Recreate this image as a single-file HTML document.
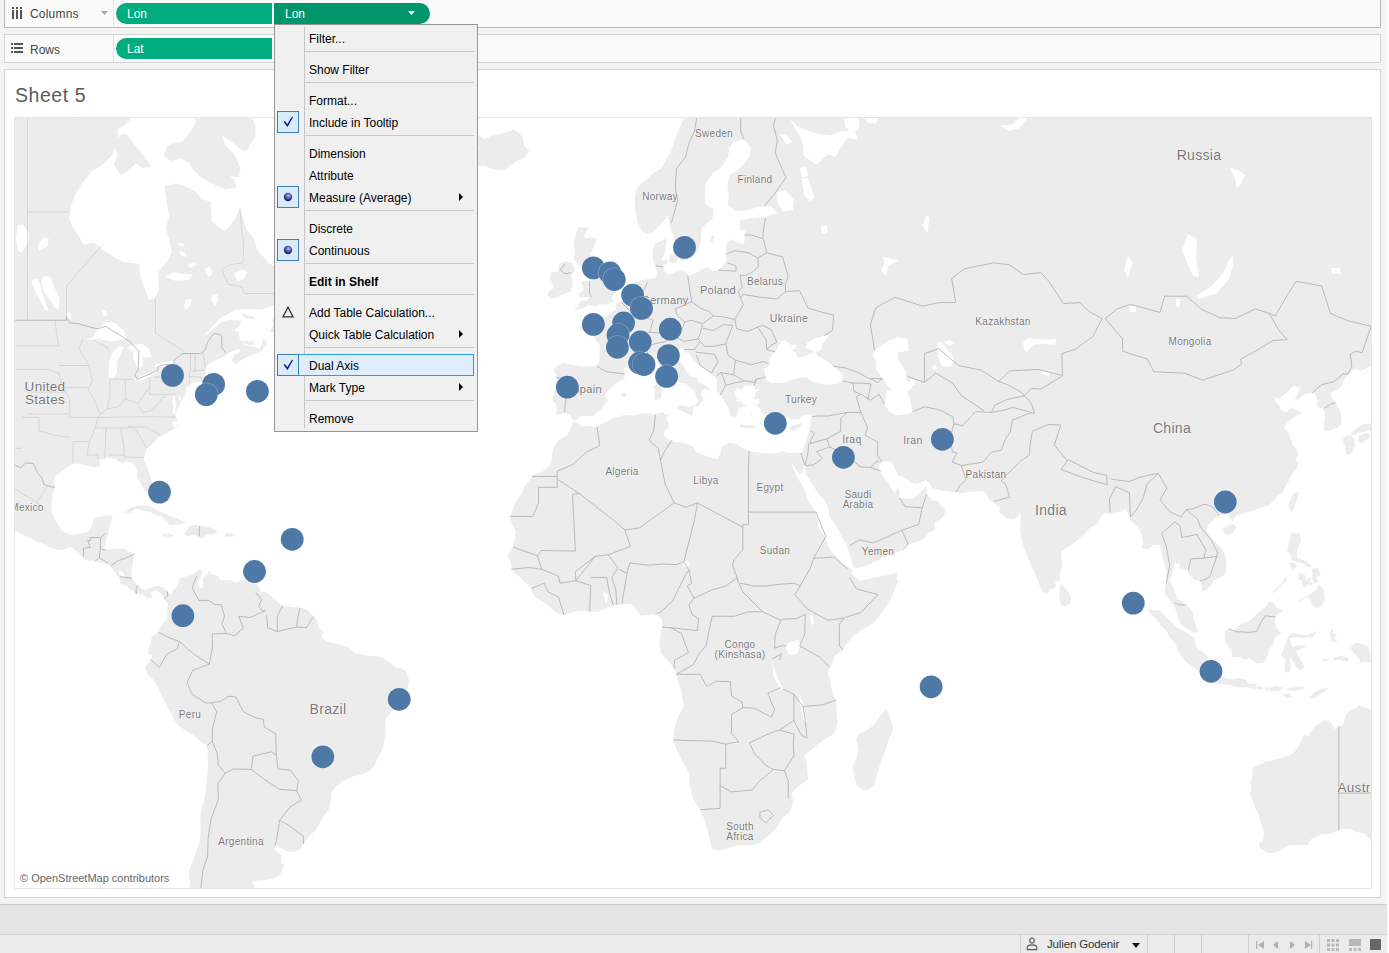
<!DOCTYPE html>
<html><head><meta charset="utf-8">
<style>
*{box-sizing:border-box}
html,body{margin:0;padding:0}
body{width:1389px;height:953px;overflow:hidden;background:#f3f3f3;position:relative;font-family:"Liberation Sans",sans-serif;color:#333}
.abs{position:absolute}
.shelf{position:absolute;left:4px;width:1377px;background:#fafafa;border:1px solid #d4d4d4}
.shelf .lbl{position:absolute;left:25px;top:8px;font-size:12px;color:#444;letter-spacing:0.2px}
.shelf .div{position:absolute;left:108px;top:0;bottom:0;width:1px;background:#e2e2e2}
.pill{position:absolute;height:21px;background:#00ad7f;color:#fff;font-size:12px;line-height:23px;padding-left:11px;border-radius:10.5px 0 0 10.5px}
.sheet{position:absolute;left:4px;top:69px;width:1377px;height:829px;background:#fff;border:1px solid #d6d6d6}
.title{position:absolute;left:15px;top:84px;font-size:19.5px;color:#5c5c5c;letter-spacing:0.55px}
.map{position:absolute;left:14px;top:117px;width:1358px;height:772px;overflow:hidden;background:#fff;border:1px solid #e6e6e6}
.lab{position:absolute;color:#777;font-size:11px;letter-spacing:0.3px;white-space:nowrap;transform:translate(-50%,-50%);text-shadow:0 0 1px #fff,0 0 1px #fff,0 0 1px #fff}
.menu{position:absolute;left:274px;top:24px;width:204px;height:408px;background:#f0f0f0;border:1px solid #979797;}
.mi{position:absolute;left:34px;font-size:12px;color:#000;line-height:24px;height:22px;white-space:nowrap}
.sep{position:absolute;left:30px;right:3px;height:1px;background:#c9c9c9}
.vsep{position:absolute;left:29px;top:2px;bottom:3px;width:1px;background:#c6c6c6}
.chk{position:absolute;left:2px;width:22px;height:22px;background:#d8ebf9;border:1px solid #3c80b4}
.arr{position:absolute;left:184px;width:0;height:0;border-left:4px solid #000;border-top:4px solid transparent;border-bottom:4px solid transparent}
.status{position:absolute;left:0;top:934px;width:1389px;height:19px;background:#ebebeb;border-top:1px solid #d2d2d2}
.ssep{position:absolute;top:0;bottom:0;width:1px;background:#cfcfcf}
</style></head><body>
<!-- columns shelf -->
<div class="shelf" style="top:-1px;height:29px;border-color:#b9b9b9;border-top:none">
  <svg class="abs" style="left:7px;top:6px" width="12" height="15" viewBox="0 0 12 15">
    <rect x="0" y="2" width="2" height="2" fill="#555"/><rect x="4" y="2" width="2" height="2" fill="#555"/><rect x="8" y="2" width="2" height="2" fill="#555"/>
    <rect x="0" y="5" width="2" height="9" fill="#555"/><rect x="4" y="5" width="2" height="9" fill="#555"/><rect x="8" y="5" width="2" height="9" fill="#555"/>
  </svg>
  <div class="lbl" style="top:8px">Columns</div>
  <svg class="abs" style="left:96px;top:12px" width="8" height="5"><path d="M0,0 L7,0 L3.5,4Z" fill="#a8a8a8"/></svg>
  <div class="div"></div>
</div>
<div class="pill" style="left:116px;top:3px;width:156px">Lon</div>
<div class="pill" style="left:274px;top:3px;width:156px;background:#00956a;border-radius:0 10.5px 10.5px 0">Lon
  <svg class="abs" style="left:134px;top:8px" width="8" height="5"><path d="M0,0 L7,0 L3.5,4Z" fill="#fff"/></svg></div>
<!-- rows shelf -->
<div class="shelf" style="top:34px;height:29px">
  <svg class="abs" style="left:6px;top:8px" width="13" height="11" viewBox="0 0 13 11">
    <rect x="0" y="0" width="2" height="2" fill="#555"/><rect x="3" y="0" width="9" height="2" fill="#555"/>
    <rect x="0" y="4" width="2" height="2" fill="#555"/><rect x="3" y="4" width="9" height="2" fill="#555"/>
    <rect x="0" y="8" width="2" height="2" fill="#555"/><rect x="3" y="8" width="9" height="2" fill="#555"/>
  </svg>
  <div class="lbl" style="top:8px;letter-spacing:0">Rows</div>
  <div class="div"></div>
</div>
<div class="pill" style="left:116px;top:38px;width:156px">Lat</div>
<!-- sheet -->
<div class="sheet"></div>
<div class="title">Sheet 5</div>
<div class="map">
<svg width="1358" height="772" viewBox="14 117 1358 772" style="position:absolute;left:-1px;top:-1px">
<path d="M736.0,400.2 740.6,400.9 746.2,405.3 745.7,407.4 740.0,403.1ZM753.0,397.3 757.0,396.5 757.6,399.5 754.2,399.5ZM753.6,402.4 755.3,403.1 754.7,405.3 753.6,404.5ZM763.8,419.5 766.7,417.8 766.7,421.6 764.4,420.9ZM750.2,412.4 751.9,412.4 751.9,414.6 750.2,414.6ZM759.9,421.6 761.0,421.6 761.0,425.1 759.9,424.4ZM-29.1,-19.2 141.2,-19.2 142.9,84.0 138.3,110.6 125.3,125.3 117.3,129.6 118.5,142.2 111.7,155.6 104.3,163.5 91.8,171.2 82.7,182.4 75.3,194.5 70.8,206.2 69.1,218.7 71.9,225.3 79.9,238.2 83.3,244.5 94.1,242.4 103.7,250.7 115.6,257.9 124.1,261.9 139.5,263.9 140.0,275.6 144.6,287.9 149.1,299.9 154.8,298.1 158.8,290.7 158.2,271.7 167.3,260.9 171.8,251.8 169.5,240.3 165.6,228.6 169.0,216.4 167.3,205.1 164.4,186.1 175.2,183.6 184.9,186.1 195.1,190.9 201.9,199.2 210.4,201.6 211.0,211.9 211.6,220.9 218.9,227.5 225.2,230.7 230.8,225.3 236.5,216.4 239.9,208.5 243.3,219.8 246.7,229.7 253.6,238.2 257.0,248.7 263.2,256.8 268.9,262.9 277.4,267.8 281.4,275.6 288.7,279.4 289.9,287.9 290.4,293.5 281.9,299.0 271.7,306.2 262.1,309.8 249.0,308.9 234.8,309.8 227.4,314.2 219.5,318.5 211.6,327.1 205.3,334.7 201.9,338.1 207.0,333.9 213.8,328.8 221.8,322.0 229.7,319.4 241.6,321.1 238.8,327.1 234.3,329.7 238.8,332.2 239.9,339.7 244.5,344.7 254.7,347.1 260.4,348.7 263.8,338.1 267.2,343.8 261.5,351.2 251.9,355.2 243.3,358.4 236.0,363.9 231.4,360.7 234.3,354.4 241.1,351.2 238.2,348.7 230.8,352.0 225.2,356.0 217.8,359.2 210.4,363.1 207.6,365.5 204.7,370.9 205.3,376.3 209.3,378.6 206.4,380.9 200.8,381.6 192.8,383.1 186.6,387.6 186.0,393.6 181.5,400.2 180.3,403.8 177.5,409.6 175.2,414.6 177.5,421.6 178.1,426.5 172.4,430.0 165.0,434.1 158.8,436.8 153.1,443.6 147.4,448.3 145.1,453.0 144.0,460.3 146.8,466.8 149.1,472.6 152.0,481.6 152.0,488.5 149.7,492.3 146.3,492.3 142.9,487.9 140.0,482.2 137.2,476.5 137.2,470.7 135.5,466.8 131.5,462.2 127.0,461.6 121.9,463.5 115.6,458.9 107.1,457.6 99.2,459.6 100.3,466.1 95.8,467.4 88.4,466.1 81.6,464.2 74.2,463.5 68.5,466.1 61.7,471.3 55.5,475.8 54.3,482.2 54.9,487.9 52.6,494.8 51.5,506.0 52.1,513.4 54.9,518.9 59.4,526.7 61.7,530.9 67.4,533.3 70.8,535.1 76.5,533.9 84.4,532.7 88.4,531.5 91.8,526.7 93.5,519.5 95.8,517.0 104.3,515.8 109.9,515.2 112.8,516.4 110.5,521.9 109.4,527.9 108.2,534.5 106.0,539.3 105.4,545.8 102.0,548.8 109.4,549.4 118.5,548.8 124.7,548.8 130.4,552.3 134.4,554.1 133.2,559.9 132.1,566.9 131.5,573.3 132.1,578.0 135.5,583.2 140.0,587.8 144.6,590.1 151.4,587.2 158.2,585.5 163.9,587.8 167.3,591.2 164.4,599.2 161.6,594.1 155.4,590.1 150.2,593.5 152.5,597.5 147.4,598.7 142.9,594.6 136.1,593.5 131.5,590.6 125.3,584.9 120.2,583.7 119.6,578.5 115.6,573.3 110.5,566.4 108.2,564.0 101.4,562.9 95.2,561.1 87.8,560.5 82.7,557.0 75.9,550.5 70.2,547.0 64.5,549.4 58.3,550.0 50.4,547.6 44.7,544.6 36.2,541.1 28.8,536.9 22.0,534.5 16.3,530.9 10.6,527.3 -29.1,527.3ZM113.9,164.8 117.3,155.6 115.1,144.9 119.6,135.2 126.4,133.8 132.7,142.2 143.4,155.6 150.8,166.1 144.0,168.6 135.5,163.5 128.1,171.2 120.7,175.0ZM186.6,75.8 194.5,110.6 195.7,122.4 189.4,133.8 182.0,142.2 172.4,143.5 166.7,146.2 163.9,155.6 170.7,160.9 180.9,158.3 188.8,163.5 194.5,171.2 201.3,177.5 208.1,181.2 217.2,186.1 226.3,189.7 230.3,188.5 236.5,187.3 234.3,179.9 221.8,167.4 217.2,166.1 224.6,173.7 232.0,176.2 238.8,177.5 240.5,168.6 236.5,159.6 234.3,154.3 225.2,144.9 221.8,135.2 232.0,142.2 239.9,149.0 246.7,151.6 251.3,142.2 255.3,136.6 255.3,125.3 251.9,118.0 249.0,75.8ZM269.4,332.2 273.4,324.6 272.3,320.3 278.0,312.4 280.8,305.3 287.6,296.2 291.6,297.2 289.3,306.2 291.0,312.4 297.8,315.0 302.9,318.5 302.4,324.6 306.3,328.8 304.1,332.2 307.5,333.1 305.2,339.7 302.4,340.5 299.0,336.4 294.4,338.1 289.3,337.2 291.0,333.1 286.5,332.2 280.2,332.2 270.6,332.2ZM241.1,340.5 245.6,341.4 254.7,341.4 251.9,345.5 244.5,343.8ZM240.5,313.3 253.6,316.8 256.4,319.4 245.6,318.5ZM124.7,512.8 129.8,507.8 135.5,506.6 142.3,505.4 149.7,506.0 156.5,509.7 165.0,513.4 172.4,517.0 177.5,518.2 185.4,522.5 181.5,524.3 169.5,524.9 166.1,521.3 162.2,517.0 155.4,514.6 149.7,512.1 145.1,510.9 141.2,510.3 136.6,508.5 129.8,512.8ZM184.3,533.9 189.4,526.1 194.0,524.9 199.6,525.5 208.1,526.7 213.3,529.1 218.4,532.7 213.8,533.9 206.4,535.1 201.3,538.7 194.5,535.1 187.1,536.3ZM161.6,533.9 169.5,533.3 174.1,535.7 170.1,537.5 162.7,535.7ZM224.6,533.3 234.3,533.9 233.7,536.3 225.2,536.9ZM255.3,578.5 260.9,578.5 260.4,582.6 255.3,582.6ZM163.9,482.2 169.5,483.5 168.4,486.0 163.3,484.1ZM162.7,492.3 166.1,494.2 164.4,499.2 161.6,496.7ZM167.3,591.2 170.7,594.6 173.5,589.5 177.5,586.0 179.2,579.1 184.3,576.8 190.5,575.6 196.2,572.2 199.6,569.3 203.0,571.6 200.2,577.4 200.2,580.8 203.6,585.5 203.0,578.0 207.6,574.5 209.8,570.4 211.6,574.5 218.4,576.2 220.6,580.3 227.4,579.7 236.5,582.6 242.2,579.7 249.0,579.1 255.3,579.7 250.7,582.6 257.0,584.3 261.5,591.2 266.6,592.4 274.0,598.7 280.8,604.9 289.3,606.7 300.1,607.8 306.3,609.5 313.2,615.8 316.6,619.8 319.4,628.8 323.4,631.1 321.1,636.8 326.2,641.3 331.9,643.0 337.0,643.6 342.7,645.3 348.9,647.6 354.6,653.3 360.3,653.8 368.2,656.1 376.7,656.1 382.4,657.8 388.6,661.8 395.5,667.5 402.8,669.2 406.8,672.0 409.1,681.2 407.9,687.5 405.1,693.2 400.6,700.1 395.5,705.9 389.8,714.0 385.8,718.1 385.2,726.3 385.2,735.2 384.1,742.9 381.3,751.3 377.9,757.9 374.5,765.2 369.9,770.7 362.5,774.4 353.5,776.2 343.8,780.6 336.4,786.2 331.3,792.5 330.7,802.6 329.0,809.7 324.5,814.9 320.0,822.8 314.3,831.4 309.7,835.4 304.1,842.9 301.2,848.4 295.0,851.8 287.6,851.8 282.5,849.0 275.1,845.6 274.6,849.7 281.4,855.3 280.8,862.3 284.2,864.4 280.2,874.4 273.4,878.8 262.6,880.2 254.1,880.9 253.0,879.5 254.1,888.3 251.3,895.8 243.3,903.3 209.3,903.3 187.7,903.3 188.3,892.0 190.0,882.4 188.8,870.8 191.7,865.1 194.5,856.0 198.5,844.9 200.2,838.8 200.8,828.7 200.2,818.8 201.3,809.1 204.2,800.7 205.9,790.0 207.0,778.1 208.1,765.2 207.6,750.1 207.0,745.9 201.3,741.7 194.0,735.8 186.6,731.0 179.2,726.3 174.1,719.9 171.3,714.0 168.4,708.8 163.3,699.6 158.2,688.6 153.7,680.0 147.4,674.3 145.1,666.9 150.8,659.5 153.1,653.8 150.8,655.0 147.4,652.7 149.7,645.9 152.0,636.8 154.8,634.5 158.8,631.1 161.0,626.0 167.3,618.6 167.3,608.4 167.8,602.7 164.4,599.2ZM573.1,422.3 576.5,421.6 581.6,426.5 590.1,425.8 595.2,427.2 599.8,425.1 606.6,421.6 615.1,417.4 623.6,415.3 635.0,415.3 643.5,413.2 655.4,414.6 662.2,411.7 665.1,414.6 669.6,413.2 666.2,418.1 669.6,426.5 663.9,432.7 664.5,436.2 669.6,440.2 674.7,442.3 681.5,442.3 692.9,446.3 695.7,451.7 703.1,455.0 712.7,458.3 717.8,458.9 720.7,453.0 720.7,447.7 728.6,442.9 737.1,444.3 742.8,448.3 749.1,451.0 761.0,453.0 776.3,453.7 782.6,451.0 789.9,453.0 800.7,453.0 804.7,464.8 801.3,474.5 796.7,471.3 791.6,462.2 792.2,466.1 796.7,477.1 799.0,480.3 803.6,487.9 808.1,500.4 815.5,512.1 818.3,521.3 817.7,526.7 824.6,536.3 828.0,545.2 830.8,550.5 834.8,555.2 840.5,560.5 846.7,566.4 852.4,569.3 851.8,574.5 859.2,580.8 867.7,579.1 879.0,576.8 890.4,574.5 897.8,572.7 896.6,578.5 898.3,580.8 894.9,588.9 889.3,601.5 881.3,613.5 873.4,623.2 863.7,628.8 855.2,634.5 847.8,642.5 842.2,649.9 834.8,656.1 831.9,662.9 827.4,673.7 829.7,678.9 830.8,685.8 833.1,694.4 835.9,700.1 836.5,711.7 837.6,723.4 834.2,733.4 819.5,742.9 810.9,750.1 804.1,754.9 807.0,765.2 808.1,779.3 796.7,787.5 791.6,793.1 793.3,802.6 789.9,811.0 782.6,818.2 776.9,827.4 768.9,835.4 759.9,842.2 751.9,845.6 740.0,844.9 731.5,847.0 720.1,851.1 711.6,848.4 710.5,842.2 708.2,833.4 704.2,818.8 700.3,809.7 693.4,799.5 692.3,796.9 689.5,783.7 688.9,773.8 682.1,760.9 676.4,748.9 673.0,739.9 674.1,729.9 677.6,717.5 683.8,705.9 682.1,696.7 681.5,690.3 677.0,679.5 676.4,674.3 674.1,668.6 669.0,661.8 661.1,653.3 659.4,643.0 660.5,634.5 662.2,626.0 661.7,618.6 657.1,614.6 653.7,614.1 646.3,615.2 640.7,615.8 636.1,608.9 632.1,604.4 625.9,603.8 615.7,604.9 606.6,607.8 598.1,611.8 590.7,611.8 583.9,610.6 573.7,611.8 564.0,615.2 555.5,612.4 547.6,604.9 541.3,600.9 535.1,596.9 531.7,591.8 530.0,586.0 524.3,582.0 520.3,577.4 515.2,573.9 511.8,568.7 511.2,562.3 507.3,555.8 510.1,551.1 512.9,547.0 514.6,539.3 515.8,531.5 512.9,526.1 510.1,519.5 511.2,513.4 514.6,504.8 518.1,498.6 522.0,492.9 524.3,486.7 529.4,480.3 533.4,475.2 541.3,472.6 548.7,466.8 551.5,461.6 552.1,455.6 553.2,448.3 558.4,440.2 563.5,437.5 568.0,434.1 570.8,427.9ZM886.4,708.8 890.4,718.1 893.2,729.3 889.3,738.1 885.9,748.9 881.9,759.1 877.9,771.3 873.9,786.2 866.6,790.0 862.6,790.0 856.9,785.6 854.1,776.2 852.9,767.0 856.3,759.1 858.6,750.1 856.3,739.9 858.6,733.4 866.0,731.0 874.5,724.6 878.5,718.1 883.6,711.7ZM686.1,40.9 684.9,116.5 679.8,128.1 675.8,138.0 670.7,151.6 666.2,159.6 661.1,168.6 652.6,173.7 645.8,179.9 637.3,187.3 635.0,195.7 635.0,208.5 636.7,217.6 638.4,224.2 642.9,231.8 646.9,234.0 653.7,231.8 660.5,224.2 665.6,218.7 667.3,214.2 669.6,223.1 670.7,229.7 674.1,238.2 677.6,247.7 679.3,254.8 680.4,260.9 687.8,259.9 689.5,252.8 697.4,251.8 700.8,242.4 701.4,228.6 707.1,223.1 712.2,218.7 713.9,209.6 705.4,203.9 704.8,193.3 705.9,182.4 712.7,173.7 721.3,167.4 728.1,157.0 729.2,147.6 733.2,142.2 744.0,139.4 750.8,147.6 750.2,155.6 744.5,163.5 736.6,171.2 729.2,175.0 727.5,184.9 728.6,195.7 728.1,205.1 734.9,210.8 744.0,210.8 753.0,208.5 762.1,206.2 770.1,206.2 778.0,213.1 771.8,214.2 766.1,217.6 758.1,217.6 746.8,218.7 740.0,220.9 740.0,229.7 745.1,230.7 744.5,241.4 743.4,244.5 736.0,241.4 729.8,239.3 725.8,246.6 726.4,254.8 726.4,261.9 723.0,265.8 717.8,270.7 712.7,270.7 706.5,266.8 698.6,271.7 690.0,275.6 683.2,270.7 677.6,270.7 669.6,274.6 667.9,275.6 664.5,270.7 663.4,264.8 661.7,258.9 665.1,251.8 666.2,242.4 666.8,237.2 661.1,241.4 655.4,243.5 653.1,248.7 652.6,259.9 655.4,265.8 657.1,272.7 655.4,278.5 652.0,278.5 646.3,279.4 640.7,280.4 635.0,282.3 633.3,287.9 631.0,292.6 627.6,298.1 624.8,299.9 620.8,301.7 615.7,303.5 615.7,309.8 611.7,312.4 607.2,315.9 602.1,317.7 599.2,315.0 595.8,314.2 598.1,322.9 591.8,324.6 586.7,322.0 581.1,323.7 579.9,328.8 582.8,330.5 589.6,333.1 594.1,336.4 595.8,340.5 599.8,344.7 599.8,351.2 599.8,357.6 598.7,363.1 596.4,366.2 589.6,366.2 581.1,366.2 572.5,364.7 562.9,363.1 556.1,367.0 553.8,370.1 556.7,377.1 556.7,383.9 556.1,389.9 553.2,396.5 552.7,400.9 556.1,403.8 556.7,407.4 556.1,413.9 561.8,413.9 564.6,412.4 569.7,414.6 571.4,418.1 574.8,420.9 578.2,418.1 581.6,416.0 586.7,416.0 594.1,416.0 597.5,411.7 602.1,409.6 603.2,405.3 607.7,401.6 604.9,396.5 606.6,392.1 611.7,386.9 615.1,383.9 619.1,381.6 624.8,377.8 624.2,373.2 623.6,368.6 628.7,365.5 633.8,366.2 637.3,367.8 641.8,368.6 645.8,366.2 648.6,363.9 653.1,362.3 657.1,358.4 662.2,360.7 665.1,365.5 666.8,370.1 669.6,374.0 675.8,378.6 680.4,383.1 684.9,383.1 687.8,386.1 690.6,387.6 695.1,391.4 695.7,396.5 698.0,400.2 695.7,404.5 695.7,407.4 698.0,406.7 700.8,403.1 703.7,399.5 700.8,395.1 704.2,389.1 708.2,389.9 711.6,391.4 711.0,393.6 708.8,387.6 703.1,383.9 697.4,381.6 696.8,377.8 690.0,376.3 685.5,370.1 683.2,364.7 677.0,359.2 676.4,351.2 681.0,347.9 684.9,348.7 683.8,353.6 687.8,352.0 691.2,356.8 695.1,362.3 699.7,365.5 706.5,369.4 709.3,372.5 714.4,377.1 717.3,380.1 716.7,385.4 716.7,389.9 720.1,394.3 724.1,400.2 726.4,404.5 729.2,409.6 729.8,414.6 733.2,417.4 736.6,417.4 737.7,411.7 738.9,407.4 742.3,407.4 743.4,405.3 738.9,401.6 736.0,397.3 734.9,392.1 736.6,387.6 741.1,389.9 744.5,386.1 750.8,385.4 754.7,386.1 755.3,389.9 758.7,389.1 762.7,389.1 770.1,388.4 776.3,386.1 771.8,383.1 766.1,380.1 765.0,373.2 763.8,369.4 768.4,366.2 768.9,360.0 771.8,355.2 775.2,352.0 778.6,345.5 780.9,341.4 786.0,340.5 790.5,344.7 795.0,344.7 797.3,346.3 791.6,350.4 796.2,352.0 797.3,356.8 801.3,357.6 806.4,355.2 810.9,353.6 813.8,351.2 809.8,349.5 805.8,347.9 807.0,343.0 812.6,339.7 819.5,337.2 824.0,335.6 829.1,335.6 825.7,339.7 822.3,343.8 821.2,349.5 818.3,351.2 815.5,352.8 818.3,356.0 823.4,358.4 831.9,364.7 837.0,369.4 842.7,374.8 842.7,380.1 837.6,383.9 831.9,384.6 824.6,384.6 818.3,383.1 813.8,382.4 806.4,377.1 799.6,377.8 793.3,379.3 786.5,382.4 779.7,383.1 772.3,383.1 770.6,385.4 763.3,387.6 759.9,389.1 755.9,391.4 755.3,396.5 758.1,397.3 759.3,403.1 756.4,405.3 761.0,409.6 761.6,413.9 766.1,415.3 770.1,416.0 774.0,419.5 779.7,418.1 780.9,414.6 787.1,416.7 792.8,420.2 799.6,418.8 803.6,415.3 810.9,414.6 812.1,416.7 810.4,422.3 810.4,426.5 808.1,434.1 805.8,440.9 804.7,445.0 803.0,449.7 800.7,453.0 804.7,464.8 805.8,473.9 809.2,479.0 813.8,486.7 818.9,494.2 824.6,500.4 828.5,508.5 829.1,515.2 833.6,522.5 838.2,529.7 842.2,537.5 846.7,545.2 849.5,552.3 850.7,558.2 852.4,563.4 853.5,567.5 858.0,568.1 862.0,566.9 870.5,563.4 879.0,559.9 885.3,557.0 893.2,554.1 902.9,550.0 905.2,545.2 913.1,542.9 920.5,540.5 926.2,536.9 929.0,532.1 934.7,530.3 934.7,522.5 938.6,520.7 943.8,515.8 946.0,509.7 941.5,506.0 938.6,501.7 932.4,500.4 926.7,494.2 926.2,486.0 922.8,489.8 918.8,493.6 913.7,498.6 905.2,498.6 899.5,497.9 899.5,491.7 897.2,486.7 894.9,493.6 891.5,488.5 888.7,482.9 883.6,477.1 880.2,471.3 878.5,465.5 882.5,461.6 888.1,461.6 891.5,462.2 894.9,468.7 898.3,475.2 904.6,477.8 911.4,482.9 917.6,484.1 926.2,479.7 930.1,484.1 931.8,487.9 940.9,490.4 950.6,491.7 956.2,492.3 960.2,492.9 971.0,491.7 983.5,491.1 986.9,494.8 989.2,500.4 993.7,501.7 997.1,506.0 1001.1,508.5 998.2,510.3 1005.1,517.6 1010.7,519.5 1018.7,516.4 1018.7,510.9 1020.4,515.2 1020.4,522.5 1019.8,530.3 1021.5,537.5 1023.2,545.2 1025.5,551.7 1028.9,559.4 1031.2,566.4 1034.6,572.7 1037.4,579.1 1039.7,586.0 1043.1,591.8 1046.5,594.1 1050.5,589.5 1056.1,587.2 1055.0,581.4 1060.1,580.8 1060.1,572.2 1062.4,565.2 1061.2,558.2 1061.8,551.1 1065.8,548.8 1070.3,545.8 1073.7,543.4 1080.0,538.1 1084.5,533.9 1089.6,527.9 1097.6,523.7 1100.4,517.0 1105.5,512.8 1109.5,514.0 1113.5,512.8 1120.3,511.5 1125.4,508.5 1128.2,513.4 1130.5,520.1 1133.3,523.1 1137.3,526.7 1141.3,533.3 1143.0,541.1 1141.8,548.2 1147.5,549.4 1153.8,544.6 1160.0,545.2 1161.7,553.5 1164.0,562.3 1166.3,571.0 1166.3,579.7 1165.1,588.9 1164.6,594.6 1168.5,598.1 1172.5,603.8 1175.9,610.1 1177.6,616.3 1181.0,624.3 1186.1,627.7 1193.5,632.8 1198.0,632.3 1195.8,625.4 1193.5,618.0 1193.5,612.9 1189.5,607.8 1186.1,604.9 1181.0,600.9 1177.0,598.7 1175.3,592.4 1173.6,587.2 1169.7,581.4 1171.4,575.6 1173.6,568.7 1174.2,563.4 1179.3,563.4 1179.3,568.1 1187.3,570.4 1189.0,573.9 1191.8,577.4 1195.2,580.3 1200.3,580.8 1202.0,585.5 1201.4,591.2 1207.1,589.5 1212.2,584.3 1213.4,580.3 1219.6,578.0 1225.3,573.9 1226.4,566.4 1226.4,561.1 1224.1,552.3 1220.7,547.6 1215.1,542.3 1211.1,537.5 1206.6,530.9 1207.7,525.5 1211.7,521.9 1216.8,517.0 1222.4,514.6 1228.7,514.6 1229.8,518.2 1232.1,522.5 1233.2,518.9 1236.6,515.2 1243.4,513.4 1250.8,510.9 1254.8,510.3 1262.2,507.2 1267.9,506.0 1273.5,501.1 1277.5,496.1 1283.7,491.7 1285.4,486.0 1288.9,480.9 1291.7,474.5 1296.2,469.4 1298.5,463.5 1295.1,459.6 1298.5,455.6 1296.8,449.7 1292.3,444.3 1290.6,437.5 1287.2,430.7 1283.7,427.9 1287.7,422.3 1291.7,418.8 1296.2,416.0 1301.9,412.4 1296.2,410.3 1291.7,408.1 1286.0,412.4 1281.5,411.0 1279.2,405.3 1274.7,400.2 1274.7,398.0 1279.8,398.0 1283.7,395.1 1287.7,391.4 1293.4,386.1 1300.2,388.4 1296.8,395.8 1294.5,400.9 1299.1,398.7 1303.6,394.3 1312.1,392.8 1316.1,395.1 1317.8,400.9 1317.2,406.7 1322.9,408.9 1325.2,413.9 1324.6,420.2 1323.5,425.8 1324.0,431.4 1329.7,430.7 1334.8,428.6 1338.8,427.2 1341.1,423.7 1341.6,416.7 1340.5,411.7 1336.5,404.5 1333.1,399.5 1330.3,395.8 1330.9,392.8 1336.5,390.6 1342.8,385.4 1343.3,380.9 1347.9,374.8 1351.3,372.5 1355.3,368.6 1360.9,370.9 1366.6,368.6 1373.4,364.7 1378.5,357.6 1401.2,328.8 1458.0,40.9ZM574.2,310.6 582.8,308.0 588.4,305.3 595.2,306.2 599.8,304.4 607.7,304.4 614.5,300.8 611.1,298.1 614.0,294.4 616.2,287.9 614.0,285.1 608.3,284.2 607.2,279.4 604.9,274.6 603.2,269.8 599.8,267.8 597.5,261.9 595.2,255.8 589.6,254.8 591.8,251.8 594.7,244.5 596.4,239.3 592.4,237.2 585.0,238.2 583.9,235.0 589.0,227.5 581.6,227.5 578.2,227.5 576.5,231.8 574.8,238.2 573.7,246.6 574.8,251.8 573.7,259.9 577.7,262.9 578.8,265.8 584.5,266.8 587.3,265.8 586.7,271.7 589.6,276.5 589.6,281.3 583.9,281.3 580.5,282.3 582.8,286.0 583.3,290.7 577.7,294.4 580.5,297.2 585.0,297.2 589.6,297.2 586.7,300.8 582.8,300.8 579.9,302.6 575.4,308.9ZM571.4,262.9 565.2,260.9 559.5,263.9 557.8,268.8 558.9,271.7 551.0,271.7 549.8,278.5 552.1,283.2 553.8,287.9 548.7,291.6 547.6,295.3 551.0,298.5 557.8,297.2 562.3,294.4 567.4,292.6 570.8,291.6 572.5,285.1 572.0,278.5 571.4,274.6 574.8,270.7 573.7,265.8ZM478.3,166.1 470.4,153.0 480.0,149.0 469.8,143.5 474.9,132.4 484.6,139.4 491.9,135.2 502.2,133.8 514.1,129.6 522.6,136.6 524.3,146.2 529.4,150.3 524.3,158.3 516.4,160.9 505.0,169.9 495.9,169.9 484.6,166.1ZM677.0,406.0 682.1,405.3 688.9,406.7 695.1,404.5 692.9,410.3 692.3,416.0 687.8,413.9 680.4,410.3 677.6,409.6ZM653.1,385.4 658.8,383.1 662.2,385.4 661.7,392.1 661.1,398.0 657.7,399.5 654.3,400.2 654.8,393.6 654.3,389.1ZM655.4,370.1 660.0,369.4 660.5,374.8 659.4,380.9 658.3,381.6 655.4,377.8 655.4,374.0ZM740.0,423.7 744.5,425.1 751.3,425.8 755.9,425.8 755.3,427.9 746.8,428.6 740.0,426.5ZM789.9,427.2 793.9,425.1 803.0,423.0 799.6,427.9 797.3,428.6 793.9,430.7 790.5,430.0ZM620.2,395.1 624.2,392.8 626.5,394.3 624.8,397.3 621.9,395.8ZM669.0,260.9 670.2,254.8 676.4,253.8 678.1,257.9 675.8,262.9 670.7,262.9ZM662.2,260.9 666.2,258.9 667.9,261.9 666.2,264.8 662.8,263.9ZM709.3,241.4 712.7,235.0 714.4,236.1 712.7,242.4ZM1060.1,584.3 1062.4,584.3 1068.1,591.8 1071.5,598.1 1069.8,603.8 1064.1,606.7 1060.7,604.4 1059.5,598.1 1059.5,592.4ZM1223.0,529.1 1228.1,524.9 1233.2,523.7 1236.6,526.7 1233.8,532.1 1228.7,535.1 1223.6,533.3ZM1288.3,506.0 1291.1,496.7 1296.2,491.7 1299.1,493.6 1296.8,499.8 1293.4,508.5 1292.3,512.8 1289.4,509.1ZM1342.8,438.9 1346.8,435.5 1350.2,435.5 1354.1,439.6 1355.3,444.3 1352.4,452.3 1348.5,455.0 1345.6,453.0 1346.2,447.0 1343.3,442.9ZM1349.6,434.8 1352.4,431.4 1357.5,427.2 1362.6,424.4 1369.5,423.7 1374.6,423.7 1376.8,424.4 1378.5,421.6 1383.1,412.4 1387.1,409.6 1389.9,406.7 1406.9,392.1 1406.9,441.6 1383.1,432.7 1378.5,438.2 1373.4,432.7 1368.3,430.0 1363.2,432.0 1358.1,432.7 1353.0,435.5ZM1358.1,440.2 1361.5,443.6 1367.2,439.6 1371.2,436.2 1368.3,432.7 1361.5,434.8 1359.2,435.5ZM1147.5,608.4 1154.3,610.6 1160.0,610.6 1164.6,615.8 1171.9,622.6 1177.6,628.3 1182.1,630.0 1188.4,634.0 1195.2,638.5 1195.8,645.9 1199.7,650.4 1203.7,652.1 1207.7,657.2 1207.7,665.8 1207.1,673.2 1200.3,673.7 1195.2,668.6 1187.3,662.9 1182.1,657.2 1177.6,649.3 1174.8,643.0 1169.7,637.4 1166.3,630.5 1161.1,626.0 1156.6,619.2 1150.9,614.6ZM1203.7,678.9 1208.3,674.3 1213.9,673.7 1221.3,676.0 1228.1,678.9 1233.8,679.5 1238.3,677.7 1245.7,679.5 1248.0,683.5 1255.9,684.0 1255.9,689.2 1248.0,687.5 1236.6,686.9 1227.0,684.6 1219.6,684.6 1211.1,682.3 1204.9,679.5ZM1256.5,686.3 1262.2,686.9 1263.3,689.2 1257.6,689.2ZM1265.0,687.5 1269.0,686.9 1268.4,690.9 1265.0,690.3ZM1270.1,687.5 1276.4,686.3 1282.6,687.5 1281.5,690.3 1273.5,691.5 1269.6,690.3ZM1286.6,688.6 1293.4,687.5 1304.2,686.3 1303.6,689.2 1293.4,690.9 1287.2,690.3ZM1282.0,694.4 1288.9,693.2 1292.3,697.2 1286.6,698.4ZM1308.2,698.4 1313.3,693.2 1321.2,688.6 1329.2,688.0 1322.9,692.6 1313.3,698.4ZM1225.3,631.1 1229.3,628.8 1233.2,630.5 1237.8,626.6 1241.2,623.7 1248.0,622.0 1253.1,617.5 1257.1,613.5 1262.2,610.1 1266.7,605.5 1269.6,600.9 1274.7,603.8 1275.8,607.2 1283.2,610.6 1278.1,614.1 1274.7,616.3 1275.2,623.2 1276.4,627.7 1281.5,634.0 1276.4,635.7 1273.5,640.2 1273.0,645.3 1269.0,649.3 1267.9,654.4 1266.2,660.1 1264.4,662.4 1257.1,663.5 1250.3,658.4 1243.4,659.5 1240.0,657.2 1235.5,657.2 1232.1,656.7 1231.5,649.9 1228.1,645.9 1225.3,640.2 1224.7,635.7ZM1284.3,671.5 1285.4,662.9 1284.9,658.9 1280.9,655.5 1283.7,648.7 1286.6,641.3 1288.3,635.7 1292.3,632.8 1299.1,634.5 1307.6,635.1 1313.8,632.3 1317.2,631.1 1312.7,637.4 1305.9,637.4 1296.2,637.4 1289.4,637.9 1292.3,647.0 1299.1,645.3 1306.5,645.3 1300.8,649.3 1295.7,651.0 1299.1,657.8 1302.5,662.9 1304.2,668.0 1300.2,670.3 1296.2,666.9 1293.4,661.8 1290.0,656.7 1290.6,665.8 1290.0,672.0 1286.6,672.6ZM1287.7,548.2 1290.0,539.3 1291.1,533.3 1296.2,532.7 1300.2,533.3 1300.8,541.1 1298.5,546.4 1296.8,551.1 1296.8,557.0 1300.8,559.4 1305.9,561.1 1311.0,565.2 1310.4,568.1 1306.5,566.4 1302.5,562.9 1296.8,561.7 1291.7,560.5 1291.1,555.2 1287.2,551.7ZM1299.1,600.4 1304.2,597.5 1308.2,595.8 1311.6,593.5 1316.1,588.9 1318.9,584.3 1323.5,588.9 1324.6,598.7 1322.9,604.4 1318.4,608.4 1311.6,604.9 1310.4,598.1 1305.9,597.5 1300.2,601.5ZM1312.1,568.7 1317.8,568.1 1320.6,575.6 1316.1,577.4 1312.7,573.9ZM1312.7,574.5 1316.1,575.6 1317.8,581.4 1315.0,583.7 1312.1,578.5ZM1298.5,572.7 1304.2,573.9 1305.9,578.0 1299.1,580.3ZM1301.3,578.5 1305.9,578.0 1307.6,583.2 1304.7,588.3 1301.9,584.3ZM1309.3,576.2 1311.0,578.5 1307.6,586.0 1307.0,582.0ZM1289.4,562.9 1294.5,562.3 1296.8,566.4 1293.4,569.8 1291.1,568.1ZM1308.7,582.6 1313.3,582.6 1312.1,585.5 1309.3,585.5ZM1271.8,592.4 1277.5,587.2 1283.2,581.4 1285.4,575.6 1286.6,580.3 1280.9,586.0 1274.1,592.4ZM1350.2,648.1 1355.8,642.5 1363.2,644.2 1368.3,645.9 1370.0,654.4 1374.0,658.9 1381.4,653.3 1389.9,650.4 1406.9,654.4 1406.9,691.5 1392.7,687.5 1388.2,670.3 1377.4,665.2 1370.0,662.4 1364.3,661.8 1360.4,662.9 1359.2,658.4 1355.3,656.1 1358.7,653.8 1354.7,654.4ZM1333.1,657.8 1341.6,656.1 1349.0,658.9 1347.9,661.8 1338.8,660.1 1334.3,660.6ZM1330.3,630.0 1333.1,627.7 1333.1,633.4 1337.1,634.5 1333.7,637.9 1338.2,643.6 1330.9,641.3 1330.3,635.7ZM1321.8,658.4 1328.6,658.9 1328.0,661.8 1322.9,661.2ZM1252.5,768.3 1254.2,767.0 1257.1,765.8 1266.2,761.5 1272.4,760.3 1280.9,757.9 1292.8,753.7 1297.9,747.7 1300.8,741.7 1304.2,734.6 1308.2,737.0 1310.4,732.2 1313.8,727.5 1318.9,723.4 1324.6,720.5 1329.2,720.5 1333.1,725.7 1334.8,729.3 1339.9,726.3 1342.8,725.7 1345.0,717.0 1347.9,712.3 1350.2,710.0 1355.8,708.2 1359.2,705.3 1363.8,707.1 1369.5,708.8 1375.7,710.0 1384.2,707.7 1401.2,756.1 1401.2,888.3 1375.7,888.3 1375.7,850.4 1370.0,839.5 1364.3,833.4 1357.0,832.1 1350.7,828.7 1338.8,830.1 1330.3,834.1 1321.8,834.1 1311.6,838.8 1307.6,844.9 1299.1,844.9 1287.7,845.6 1279.2,851.1 1273.5,853.2 1266.7,852.5 1259.3,847.7 1259.3,842.9 1262.7,840.8 1263.9,834.1 1263.3,828.7 1259.9,820.8 1258.8,814.3 1254.8,807.8 1253.1,801.4 1249.7,793.7 1251.4,788.7 1250.3,783.1 1252.5,776.2 1252.0,771.3Z" fill="#ececec" stroke="none"/>
<path d="M173.0,395.8 175.2,397.3 175.8,404.5 175.2,413.9 173.0,413.9 173.5,406.7 172.4,400.9ZM178.1,394.3 180.9,398.0 180.3,400.9 178.6,399.5ZM172.4,421.6 176.9,421.6 177.5,426.5 173.0,427.2ZM118.5,570.4 121.9,571.6 125.3,576.2 123.0,577.4 119.6,573.9ZM199.6,578.0 201.3,578.5 203.6,583.2 202.5,588.3 199.1,587.2 197.9,583.2ZM909.1,382.4 912.0,378.6 915.4,380.9 914.2,385.4 910.8,385.4ZM1039.1,373.2 1043.7,370.9 1050.5,372.5 1049.3,375.5 1043.7,374.8ZM102.0,309.8 106.5,310.6 107.1,315.9 102.6,315.9ZM65.7,313.3 70.2,313.3 71.4,318.5 67.4,319.4ZM178.1,242.4 183.2,243.5 184.9,246.6 178.6,245.6ZM682.1,562.3 687.2,560.5 690.0,564.0 687.8,567.5 683.8,565.8ZM603.8,591.8 608.3,594.6 606.6,603.8 603.2,595.8ZM810.4,614.6 812.6,615.2 813.8,623.2 811.5,625.4 810.4,619.8ZM872.8,355.2 876.2,348.7 885.9,342.2 897.2,337.2 907.4,338.9 908.6,351.2 897.8,352.0 898.3,360.0 905.7,370.9 906.9,380.1 912.5,387.6 906.9,392.1 909.7,398.0 912.5,411.7 907.4,413.9 896.1,415.3 889.3,411.0 884.7,405.3 887.0,390.6 892.1,389.1 887.6,386.1 882.5,378.6 876.2,369.4 876.2,361.5ZM937.5,341.4 942.6,343.0 947.2,349.5 944.3,355.2 939.2,357.6 937.5,349.5ZM1023.2,341.4 1029.5,338.1 1035.1,338.9 1043.7,339.7 1056.1,338.9 1055.0,344.7 1043.7,343.8 1034.0,344.7 1030.0,348.7 1026.1,352.0 1023.8,348.7ZM790.5,119.5 798.4,126.7 808.1,131.0 817.7,133.8 830.8,135.2 840.5,131.0 854.6,131.0 857.5,139.4 847.8,138.0 838.2,151.6 835.9,157.0 828.0,154.3 821.7,159.6 816.6,164.8 808.7,159.6 803.6,155.6 803.0,144.9 800.2,136.6 793.9,126.7ZM83.8,339.7 92.9,337.2 98.0,328.8 105.4,322.0 115.1,322.9 124.1,330.5 126.4,338.9 117.3,340.5 109.4,341.4 98.6,338.9ZM108.2,377.1 113.4,379.3 116.8,372.5 117.3,361.5 121.9,351.2 124.1,347.1 118.5,346.3 112.2,353.6 109.4,361.5ZM126.4,347.1 133.2,352.0 133.8,359.2 138.3,369.4 142.9,365.5 142.9,357.6 151.4,356.8 149.1,348.7 142.3,343.8 132.1,344.7ZM133.2,379.3 141.2,380.9 152.5,375.5 158.2,370.9 150.2,372.5 140.0,376.3ZM153.7,367.0 166.7,367.0 174.1,365.5 173.0,360.0 166.7,362.3 155.9,363.9ZM788.2,642.5 799.0,639.6 800.2,645.9 796.7,653.8 789.4,655.0 786.0,648.7ZM772.3,658.9 774.0,667.5 776.9,676.0 780.3,682.9 783.1,689.2 780.9,689.2 775.7,681.2 772.9,674.3ZM799.6,694.4 803.0,703.0 804.7,711.7 807.0,722.2 803.0,719.3 801.3,708.8 799.0,700.1ZM1232.5,256.0 1234.0,262.0 1229.0,279.0 1217.0,293.0 1199.0,299.0 1196.0,296.0 1211.0,287.0 1223.0,273.0 1228.0,262.0ZM1188.0,234.0 1197.0,240.0 1196.0,258.0 1199.0,277.0 1193.0,276.0 1187.0,262.0 1182.0,250.0ZM1229.0,167.0 1238.0,170.0 1245.0,175.0 1240.0,185.0 1237.0,189.0 1235.0,178.0ZM1128.0,256.0 1132.0,262.0 1128.0,278.0 1124.0,270.0ZM1176.0,298.0 1180.0,300.0 1179.0,308.0 1176.0,306.0ZM1130.0,306.0 1136.0,306.0 1136.0,312.0 1130.0,312.0ZM1331.0,268.0 1340.0,268.0 1341.0,274.0 1332.0,274.0ZM843.1,116.0 858.3,116.0 859.5,127.1 853.2,133.4 845.7,127.1ZM863.3,116.0 878.4,116.0 875.9,123.3 868.3,123.3ZM1000.6,125.8 1009.4,130.9 1019.5,128.3 1027.1,118.3 1022.0,116.0 1012.0,124.6ZM776.4,192.6 785.2,190.1 794.0,200.1 792.8,210.2 782.7,211.5 777.6,202.7ZM801.6,178.7 807.9,177.5 814.2,197.6 810.4,201.4 804.1,195.1ZM882.2,256.8 898.6,260.6 888.5,265.6 886.0,275.7 880.9,270.7 884.7,263.1ZM926.3,215.3 929.3,217.8 927.5,232.9 922.5,225.3ZM820.5,227.0 826.0,225.3 828.0,232.0 822.0,234.2ZM780.0,135.0 786.0,134.0 792.0,142.0 787.0,145.0ZM800.0,168.0 806.0,167.0 808.0,176.0 802.0,178.0ZM938.0,356.0 944.0,350.0 951.0,352.0 954.0,362.0 950.0,367.0 942.0,366.0ZM944.0,342.0 950.0,340.0 954.0,344.0 948.0,346.0ZM932.0,366.0 936.0,365.0 937.0,370.0 933.0,370.0ZM43.2,275.8 50.0,276.8 52.9,283.6 59.7,299.1 58.7,308.9 54.8,307.9 48.0,297.2 44.1,291.4 41.2,281.6ZM31.5,279.7 37.3,278.7 40.2,285.5 43.2,295.3 46.1,305.0 49.0,310.8 45.1,309.8 39.3,299.1 35.4,291.4 32.5,285.5ZM17.9,225.3 22.7,224.3 29.6,234.0 28.6,241.8 21.8,252.5 17.9,250.5 15.9,238.9ZM43.2,236.9 49.0,238.9 47.0,246.7 39.3,250.9 37.3,246.7ZM165.6,276.8 173.4,271.9 183.1,273.9 192.8,274.8 189.0,279.7 175.4,280.7ZM179.2,251.5 185.0,252.5 187.0,256.4 181.2,255.4ZM187.0,265.1 193.8,262.2 196.7,264.2 190.9,268.0ZM205.5,268.0 210.3,267.1 212.3,273.9 208.4,276.8 205.5,272.9ZM187.0,299.1 191.9,299.1 190.0,306.0 185.1,309.8 184.1,305.0ZM212.3,294.3 217.2,294.3 218.1,301.1 215.2,306.0 211.3,300.1ZM233.7,273.9 241.5,269.0 247.3,271.9 244.4,278.7 237.6,281.6Z" fill="#fff" stroke="none"/>
<path d="M27.6,320.3 27.6,211.9 27.6,75.8M27.6,211.9 68.5,211.9M66.5,316.8 66.5,286.0 101.4,245.6M155.4,298.1 155.4,333.1 183.7,351.2M239.9,208.5 241.6,228.6 243.9,244.5 242.8,262.9 229.1,264.8 221.8,269.8 228.0,284.2 241.6,287.0 244.5,293.5 282.5,293.5M16.0,346.0 58.5,346.0M16.0,369.4 47.5,369.4 59.1,373.2M27.4,392.1 65.7,392.1M27.4,413.9 69.5,413.9M22.0,417.4 39.0,417.4 39.0,430.9 56.0,435.5 70.2,437.5M21.6,448.3 1.5,448.3M58.5,346.0 54.9,320.3M82.7,339.7 79.3,348.7 88.9,365.5M58.9,365.5 88.9,365.5M62.8,387.6 87.8,387.6M58.9,373.2 62.8,387.6M62.8,387.6 69.7,398.7 69.7,417.4 95.2,417.4 98.6,417.4M73.1,441.6 88.9,441.6M73.1,441.6 73.1,463.5M88.9,365.5 92.4,380.9 87.8,389.1 94.6,400.9 100.3,413.9 98.0,417.4 95.2,427.9 89.5,441.6 86.7,455.0 97.5,455.0 98.6,460.3M106.0,427.9 104.8,458.9M120.7,427.9 124.1,448.3 124.1,455.0M109.4,455.0 124.1,455.0 124.7,457.0 141.2,457.6 144.0,457.0M95.2,427.9 128.1,427.9 134.9,427.9M98.6,417.4 142.9,416.7 175.8,417.1M128.1,426.5 146.8,427.2 161.0,435.5M134.9,427.9 146.8,448.3M100.9,413.9 107.1,408.9 118.5,406.7 125.3,398.7 137.8,403.8 149.1,387.6M109.9,379.3 109.9,397.3 107.1,408.1M125.3,379.3 125.3,398.7M109.9,378.9 132.7,379.3M93.5,340.5 107.1,347.1 109.4,352.8M149.7,377.1 149.7,394.3 176.4,394.3M153.7,377.1 178.6,377.1 182.6,381.6M137.8,405.3 142.9,412.4 152.5,410.3 163.9,396.5 165.6,397.3M190.5,353.6 190.5,371.7M195.1,353.6 195.1,371.7M189.4,371.7 189.4,384.6M189.4,376.7 201.3,377.1 201.9,380.9M203.0,351.2 205.3,368.6M190.5,371.3 204.7,370.1M14.0,487.3 22.0,493.6 33.3,499.8 44.7,509.1M46.9,487.3 36.2,502.9" fill="none" stroke="#cbcbcb" stroke-width="0.7"/><path d="M-17.8,320.3 66.5,320.3 66.5,316.8 69.7,322.9 78.7,323.7 90.1,327.1 98.0,328.8 105.4,326.3 124.7,338.1 129.2,341.4 132.7,344.7 138.9,351.2 138.3,369.4 134.9,374.8 137.2,379.3 149.7,374.0 158.2,370.1 157.6,367.0 163.9,364.7 173.5,364.7 174.1,360.0 182.6,353.6 200.8,353.6 204.7,350.4 208.1,341.4 213.8,333.5 219.5,334.3 221.8,336.7 221.8,347.9 225.7,352.8M-6.4,449.7 2.1,449.7 11.2,457.6 13.5,464.2 20.8,468.1 25.4,462.9 33.3,463.5 37.3,472.6 41.8,477.8 44.1,484.8 54.9,487.6M83.3,557.0 83.8,553.5 83.3,548.2 90.1,547.6 87.8,540.5 90.2,540.8 90.1,537.5 100.6,537.5 105.4,533.3M100.6,537.5 100.3,548.8 106.0,550.0M100.3,548.8 99.4,557.6 108.2,563.4M99.4,557.6 95.2,561.1M111.1,565.9 118.5,560.5 124.1,558.8 134.4,554.1M120.2,576.8 129.8,578.0 131.5,578.0M136.1,594.1 136.1,588.9 137.8,585.5M167.3,591.2 167.8,595.2 164.4,599.2M199.6,526.1 199.1,531.5 199.6,536.3M196.8,576.2 193.4,584.3 192.3,587.8 195.7,594.6 199.1,600.4 208.7,600.4 215.0,604.9 221.2,604.4 224.6,616.3 221.8,623.7 226.3,633.4M255.8,592.4 261.5,599.8 258.7,606.7 262.1,610.6 265.5,610.6M265.5,610.6 250.1,617.5 238.8,616.3 243.3,628.3 234.8,635.7 226.3,633.4M282.5,606.1 277.4,616.3 277.4,631.7M300.1,607.8 297.8,617.5 296.7,627.1M266.6,614.6 267.7,627.7 277.4,631.7 285.9,629.4 296.7,627.1 306.3,627.7 313.7,616.3M226.3,633.4 212.1,634.0 212.7,646.4 209.3,664.1M209.3,664.1 193.4,653.8 179.2,641.3 169.5,637.9 158.8,632.3M179.2,641.3 177.5,648.7 166.7,654.4 159.3,667.5 150.8,659.5M209.3,664.1 192.8,670.3 187.1,682.3 191.7,693.8 196.8,697.2 205.9,703.0 211.6,702.7M211.6,702.7 216.7,711.7 212.7,728.1 212.1,741.1 207.0,745.9M211.6,702.7 220.6,701.3 229.1,696.1 236.0,697.2 243.3,711.7 254.7,717.5 263.2,719.3 264.3,726.9 275.7,734.0 276.3,754.9M276.3,754.9 271.1,751.9 253.0,756.1 251.3,769.5M251.3,769.5 233.7,768.9 225.2,773.2M212.1,741.1 217.2,753.1 218.4,765.2 225.2,773.2M225.2,773.2 217.8,783.7 218.4,799.5 211.0,818.8 208.1,838.8 207.6,856.0 203.0,870.1 200.8,888.3 199.1,903.3M251.3,769.5 266.0,780.6 279.7,789.3 296.7,790.6M276.3,754.9 278.0,768.9 290.4,770.1 298.4,780.6 296.7,790.6M296.7,790.6 301.2,800.1 289.9,807.1 279.7,820.1M279.7,820.1 288.7,825.4 303.5,836.1 303.5,843.6M279.7,820.1 276.8,838.1 275.1,845.6M705.9,99.9 697.4,113.6 694.6,131.0 688.9,143.5 685.5,157.0 676.4,168.6 675.3,188.5 677.6,200.4 674.1,213.1 671.3,223.1M740.6,115.0 740.6,131.0 744.0,139.4M774.0,92.1 776.9,112.1 773.5,125.3 777.4,140.8 775.2,153.0 779.7,163.5 786.0,177.5 774.0,194.5 764.4,206.2M765.5,217.6 763.3,230.7 762.7,238.2M744.5,235.0 751.3,235.0 762.7,238.8M763.3,238.8 766.7,252.8 757.6,257.9M726.1,254.1 734.9,250.7 748.5,252.8 757.6,257.9M757.6,257.9 758.7,265.8 753.0,271.7 745.1,275.6 740.0,275.1M727.5,262.9 736.0,265.8 736.0,271.2 717.8,270.2M740.0,275.1 742.3,287.0 738.3,291.6 740.6,298.1M740.6,298.1 743.4,304.4 734.9,319.4M687.8,276.5 689.5,287.9 691.7,301.7M691.7,301.7 700.3,308.0 708.8,311.5 713.3,315.9M713.3,315.9 723.0,316.8 734.9,319.4M766.7,252.8 782.6,256.8 788.2,276.5 785.4,284.2 785.4,291.6M785.4,291.6 776.9,299.0 759.9,297.2 742.8,294.4 740.6,298.1M785.4,291.6 799.6,290.7 808.1,308.0 822.3,312.4 833.6,315.0 832.5,330.5 824.0,335.6M734.9,319.4 736.6,328.8 747.9,331.4 757.6,327.1 762.7,325.4 771.2,329.7 776.9,342.2 770.6,345.5 766.7,349.5 775.2,352.0M757.6,327.1 766.1,339.7 766.7,349.5M647.5,282.3 644.6,288.8 640.7,295.3 640.1,304.4M640.1,304.4 642.9,315.9 653.1,320.3 649.7,332.2M655.4,265.8 662.8,266.8M675.3,308.9 687.8,303.5 691.7,301.7M675.3,308.9 677.0,315.0 684.9,322.0M684.9,322.0 680.4,333.1 666.2,333.1 661.1,333.1M649.7,332.2 661.1,333.1M625.9,299.0 635.0,298.1 640.1,304.4M620.8,301.7 630.4,311.5 637.8,315.9 642.9,315.9M649.7,332.2 646.3,333.1 640.7,343.8 646.3,346.3 649.2,363.1M646.3,346.3 654.8,343.8 666.2,341.4 666.2,338.9 661.1,333.1M684.9,322.0 691.7,320.3 702.5,323.7M702.5,323.7 700.3,333.1 698.0,338.9M666.2,338.9 675.8,337.2 684.4,341.4 698.0,338.9M702.5,323.7 713.3,315.9M702.5,328.0 713.3,330.5 723.0,324.6 732.6,325.4M732.6,325.4 725.8,343.8M725.8,343.8 713.9,346.3 704.8,346.3 698.0,338.9M725.8,343.8 728.1,355.2 735.4,360.0M735.4,360.0 750.8,364.7 763.8,361.5 768.9,363.9M735.4,360.0 733.7,374.8M733.7,374.8 744.5,380.9 754.7,382.4 755.9,379.3 765.5,377.1M755.9,379.3 754.2,386.1M720.1,395.1 725.8,385.4 736.6,382.4 744.5,380.9M716.7,376.3 720.7,372.5 723.5,377.8 725.8,385.4M720.7,372.5 733.7,374.8M695.7,352.0 714.4,354.4 717.8,361.5 711.6,373.2 700.3,365.5 696.3,355.2M683.8,349.5 694.6,349.5 700.3,341.4M556.1,377.8 569.7,377.8 567.4,384.6 566.9,395.1 565.2,403.8 564.6,412.4M596.4,366.2 606.6,371.7 624.8,374.0M571.4,272.7 565.2,273.7 560.1,269.8 565.2,263.9M589.0,264.8 595.2,256.8M589.6,281.3 589.6,293.5 591.3,297.2M871.1,378.6 882.5,378.6M833.1,366.2 845.0,367.8 856.3,371.7 867.7,377.8 877.9,382.4 882.5,378.6M874.5,350.4 870.5,324.6 875.6,308.0 894.9,297.2 922.8,306.2 938.6,302.6 955.7,302.6 952.8,285.1 951.7,278.5 964.2,268.8 993.7,262.9 1009.6,264.8 1023.2,274.6 1040.8,272.7 1048.8,281.3 1063.5,303.5 1080.0,302.6 1089.1,311.5 1102.1,318.5M1105.0,318.5 1117.4,308.9 1130.5,304.4 1160.0,312.4 1164.6,296.2 1186.7,296.2 1200.9,308.9 1219.6,317.7 1235.5,318.5 1255.4,308.9 1269.0,313.3M1269.0,313.3 1275.2,315.9 1287.7,294.4 1296.2,281.3 1321.8,286.0 1330.3,313.3 1349.0,321.1 1371.2,326.3 1362.1,352.8 1355.3,351.2 1350.2,354.4 1351.9,366.2 1347.9,374.0M1105.0,318.5 1122.5,338.9 1122.5,351.2 1147.5,359.2 1153.8,371.7 1184.4,373.2 1202.6,380.1 1233.2,370.1 1241.7,363.9 1240.6,359.2 1256.5,350.4 1273.0,340.5 1287.2,339.7 1278.6,329.7 1269.0,313.3M1102.1,318.5 1093.0,336.4 1074.9,349.5 1061.8,353.6 1062.4,375.5M1062.4,375.5 1038.0,369.4 1009.6,370.9 998.8,381.6 981.2,370.1 958.5,365.5 938.6,348.7 924.5,353.6 924.5,382.4 907.4,376.3M912.5,411.7 924.5,406.7 938.6,409.6 952.8,416.7 954.0,423.7M954.0,423.7 950.0,436.8 952.3,451.7 956.8,453.0 952.3,462.2 961.4,465.5M961.4,465.5 965.9,479.7 960.2,484.8 956.2,492.3M961.4,465.5 982.9,462.2 991.4,452.3 1001.1,450.3 1005.6,438.9 1010.2,432.0 1012.4,420.2 1029.5,413.2M954.0,423.7 962.5,425.8 975.5,411.7 991.4,412.4 1003.9,410.3 1012.4,407.4 1031.7,412.4M924.5,382.4 935.8,373.2 952.8,383.1 961.4,395.8 972.7,403.1 984.1,411.0M991.4,412.4 994.8,405.3 1006.8,399.5 1024.4,395.8 1031.2,388.4 1040.8,389.1 1061.8,376.3M998.8,381.6 1007.3,384.6 1020.9,392.1 1024.4,395.8M1029.5,413.2 1034.6,413.2 1031.2,403.1 1024.4,395.8M993.7,501.7 1003.9,498.6 1009.6,497.3 1005.6,484.1 1001.1,480.9 1019.8,461.6 1029.5,455.0 1030.0,445.0 1032.3,431.4 1048.2,424.4M1048.2,424.4 1060.7,425.1 1054.4,445.0 1066.9,460.3M1061.2,469.4 1083.4,477.8 1107.2,484.8 1106.7,475.2 1093.6,472.6 1068.1,459.6 1061.2,469.4M1110.1,512.1 1109.5,498.6 1115.7,486.7 1129.4,492.9 1130.5,517.0M1110.6,479.0 1128.8,481.6 1140.1,477.1 1158.3,473.3M1158.3,473.3 1147.0,484.1 1143.0,498.6 1135.6,510.9 1130.5,517.0M1158.3,473.3 1166.8,488.5 1160.0,499.8 1169.7,511.5 1181.0,517.0M1174.8,521.9 1161.7,533.3 1166.3,546.4 1169.7,565.2 1166.3,583.2M1181.0,517.0 1186.1,509.7 1191.8,509.1 1204.3,504.2 1212.2,506.6 1219.0,515.2M1186.1,509.7 1197.5,518.9 1200.3,526.7 1211.1,539.9 1217.3,551.7 1216.8,556.4M1174.8,521.9 1180.4,526.7 1181.6,537.5 1196.9,534.5 1206.0,550.0 1203.7,558.2M1188.4,570.4 1190.7,558.8 1203.7,558.2 1216.8,556.4 1209.4,577.4 1202.6,580.3 1199.7,580.8M1174.8,603.2 1180.4,604.9 1186.1,604.9M1228.7,628.8 1236.6,631.7 1248.0,632.3 1256.5,631.7 1262.2,620.3 1265.0,615.8 1275.8,616.9M1312.1,392.8 1321.8,384.6 1334.3,381.6 1342.8,374.0 1347.9,374.0M1324.6,408.1 1330.3,404.5 1335.4,402.4M1338.8,725.7 1338.8,830.1M1338.8,793.1 1406.9,793.1M812.1,416.7 816.6,416.0 828.0,416.0 847.3,412.4 860.9,412.4M860.9,412.4 856.3,396.5 860.9,394.3M842.2,380.9 852.9,383.1 854.1,391.4 860.9,394.3M860.9,394.3 870.5,400.2 879.0,394.3 884.2,403.8M852.9,383.1 862.0,383.1 871.1,383.9 867.7,399.5M860.9,412.4 864.9,421.6 867.7,427.9 864.9,434.8 877.9,442.3 877.3,455.0 881.9,461.6M847.3,412.4 841.0,418.1 840.5,431.4 826.8,438.9 829.7,447.0 845.6,454.3 860.3,466.8 870.5,467.4 877.3,460.9 879.0,461.6M870.5,467.4 881.3,471.3M810.4,430.7 814.3,433.4 810.9,440.2 809.8,443.6 826.8,438.9M829.7,447.0 816.6,451.7 822.3,458.3 813.8,464.8 805.3,465.5M808.7,443.6 808.1,451.7 805.3,464.8M800.7,453.0 804.7,464.8M849.5,545.8 859.2,539.9 873.4,542.9 901.8,530.3 918.8,524.3 922.2,507.8 905.2,506.6 899.5,497.9M902.9,550.0 908.0,544.0 901.8,530.3M922.2,507.8 926.7,494.2M597.0,427.2 599.8,445.6 586.2,452.3 573.1,464.2 557.2,471.3 557.2,476.5M557.2,476.5 531.7,476.5M557.2,476.5 557.2,487.3 538.5,487.3 538.5,502.9 532.8,516.4 510.1,516.4M557.2,479.0 579.4,493.6 613.4,520.1 624.8,529.7 631.0,529.1 639.5,527.9 674.1,502.9M655.4,414.6 653.7,430.7 649.2,440.2 658.3,448.3 660.5,460.3 665.1,484.1 674.1,502.9M671.9,440.2 665.1,450.3 660.5,460.3M749.1,451.0 748.5,468.1 748.5,512.1 816.0,512.1M748.5,512.1 748.5,524.3 742.8,524.3 742.8,527.3 697.4,502.9 686.1,507.2 674.1,502.9M742.8,527.3 742.8,550.0 733.7,559.9 732.6,565.8 737.7,579.1 736.6,578.0M579.4,493.6 572.5,494.2 575.4,551.1 541.3,550.5 537.4,555.8M624.8,529.7 630.4,546.4 608.3,554.7 595.2,556.4 575.9,580.8M697.4,502.9 694.6,519.5 683.8,561.7M683.8,561.7 676.4,564.6 663.4,564.0 648.0,565.2 629.9,562.9 627.0,573.3 621.9,603.8M683.8,561.7 688.9,569.8 683.8,578.0 677.6,590.6 673.0,600.4 661.1,611.8 655.4,614.1M688.9,569.8 691.7,583.2 687.2,586.0 694.0,598.1 711.6,590.1 725.8,586.0 736.6,578.0M740.0,583.2 754.2,586.0 765.5,586.0 779.7,584.3 793.9,583.2 800.2,586.0M816.0,512.1 825.7,536.3 813.8,558.2 810.4,568.1 800.2,586.0M813.8,558.2 825.1,557.6 833.6,557.0 847.3,568.7M849.5,577.4 856.3,588.9 877.9,594.6 860.9,612.4 845.0,617.5M800.2,586.0 795.0,594.6 807.0,608.9 828.0,620.3 844.4,618.0M844.4,618.0 839.3,624.3 839.3,645.3 842.7,649.9M799.6,645.9 820.0,657.2 829.1,666.9M799.6,645.9 804.7,634.5 805.3,614.1 796.7,618.6 782.6,619.2 780.9,620.3 775.2,634.5 774.6,648.1 781.4,645.9 786.0,645.9M772.3,658.9 781.4,653.8 779.7,660.1M783.1,689.2 793.9,694.4 803.0,706.5 822.3,704.8 835.9,700.1M712.2,616.3 734.3,616.3 748.5,611.8 762.7,611.8 780.9,620.3M712.2,616.3 705.9,645.9 698.6,654.4 693.4,664.6 676.4,674.3M676.4,674.3 700.3,674.3 706.5,686.3 716.7,681.2 730.3,681.7 731.5,696.1 742.3,702.4 742.8,707.7 731.5,714.6 731.5,733.4 738.9,741.7M742.8,707.7 754.2,708.2 771.2,717.0 774.6,710.0 767.8,693.2 780.9,687.5M662.2,627.1 670.7,627.7 697.4,630.5 698.6,618.6 692.3,614.6 688.9,604.9 694.0,598.1M670.7,627.7 681.5,633.4 688.3,652.7 674.7,660.1 674.1,668.6M736.6,578.0 742.8,591.8 748.5,597.5 762.7,611.8M673.6,739.9 686.1,740.5 711.6,741.1 725.8,744.1 738.9,741.7M725.8,744.1 725.8,768.3 720.1,768.3 720.1,785.6 720.1,808.4 700.3,809.7M720.1,785.6 731.5,791.9 751.9,790.0 759.9,780.6 773.5,769.5 784.3,770.7 788.2,780.6 788.2,798.2M749.6,742.9 765.5,735.2 779.2,729.9 793.9,734.0 793.3,744.1 793.9,756.1 784.3,770.7M749.6,742.9 754.2,753.1 765.5,765.2 773.5,769.5M779.2,729.9 793.9,720.5 793.9,694.4M803.0,706.5 805.3,720.5 807.0,738.1 801.3,735.2 793.9,720.5M759.9,812.3 768.4,809.7 773.5,815.6 765.5,822.8 759.9,817.5 759.9,812.3M512.9,547.0 537.4,555.8 541.9,569.3M511.2,569.3 528.8,567.5 541.9,569.3 558.4,576.2 560.1,583.2M531.7,588.3 544.2,583.2 548.1,591.8 558.4,596.9 564.0,615.2M560.1,583.2 575.9,580.8 590.7,585.5 589.6,611.8M590.7,577.4 606.6,577.4 610.0,594.6 613.4,605.5M611.7,577.4 615.7,588.9 616.8,604.9M608.3,554.7 618.0,568.1 611.7,577.4M619.1,569.3 627.0,573.3M575.9,580.8 575.4,571.6 595.2,556.4" fill="none" stroke="#a9a9a9" stroke-width="0.75" stroke-linejoin="round"/>
</svg>
<div class="lab" style="left:699px;top:16px;font-size:10px;line-height:10px;text-align:center">Sweden</div><div class="lab" style="left:740px;top:62px;font-size:10px;line-height:10px;text-align:center">Finland</div><div class="lab" style="left:1184px;top:37px;font-size:14px;line-height:14px;text-align:center">Russia</div><div class="lab" style="left:645px;top:79px;font-size:10px;line-height:10px;text-align:center">Norway</div><div class="lab" style="left:750px;top:164px;font-size:10px;line-height:10px;text-align:center">Belarus</div><div class="lab" style="left:703px;top:172px;font-size:11px;line-height:11px;text-align:center">Poland</div><div class="lab" style="left:650px;top:182px;font-size:11px;line-height:11px;text-align:center">Germany</div><div class="lab" style="left:774px;top:200px;font-size:10.5px;line-height:10px;text-align:center">Ukraine</div><div class="lab" style="left:988px;top:204px;font-size:10px;line-height:10px;text-align:center">Kazakhstan</div><div class="lab" style="left:1175px;top:224px;font-size:10px;line-height:10px;text-align:center">Mongolia</div><div class="lab" style="left:786px;top:282px;font-size:10px;line-height:10px;text-align:center">Turkey</div><div class="lab" style="left:837px;top:321px;font-size:10.5px;line-height:10px;text-align:center">Iraq</div><div class="lab" style="left:898px;top:322px;font-size:10.5px;line-height:10px;text-align:center">Iran</div><div class="lab" style="left:971px;top:357px;font-size:10px;line-height:10px;text-align:center">Pakistan</div><div class="lab" style="left:1157px;top:310px;font-size:14px;line-height:14px;text-align:center">China</div><div class="lab" style="left:30px;top:275px;font-size:13.5px;line-height:13px;text-align:center">United<br>States</div><div class="lab" style="left:12px;top:390px;font-size:10px;line-height:10px;text-align:center">Mexico</div><div class="lab" style="left:572px;top:271px;font-size:11px;line-height:11px;text-align:center">Spain</div><div class="lab" style="left:607px;top:354px;font-size:10px;line-height:10px;text-align:center">Algeria</div><div class="lab" style="left:691px;top:363px;font-size:10px;line-height:10px;text-align:center">Libya</div><div class="lab" style="left:755px;top:370px;font-size:10px;line-height:10px;text-align:center">Egypt</div><div class="lab" style="left:843px;top:382px;font-size:10px;line-height:10px;text-align:center">Saudi<br>Arabia</div><div class="lab" style="left:863px;top:434px;font-size:10px;line-height:10px;text-align:center">Yemen</div><div class="lab" style="left:1036px;top:392px;font-size:14px;line-height:14px;text-align:center">India</div><div class="lab" style="left:760px;top:433px;font-size:10px;line-height:10px;text-align:center">Sudan</div><div class="lab" style="left:725px;top:532px;font-size:10px;line-height:10px;text-align:center">Congo<br>(Kinshasa)</div><div class="lab" style="left:313px;top:591px;font-size:14px;line-height:14px;text-align:center">Brazil</div><div class="lab" style="left:175px;top:597px;font-size:10px;line-height:10px;text-align:center">Peru</div><div class="lab" style="left:226px;top:724px;font-size:10px;line-height:10px;text-align:center">Argentina</div><div class="lab" style="left:725px;top:714px;font-size:10px;line-height:10px;text-align:center">South<br>Africa</div><div class="lab" style="left:1339px;top:669px;font-size:13.5px;line-height:13px;text-align:center">Austr</div>
<svg width="1358" height="772" viewBox="14 117 1358 772" style="position:absolute;left:-1px;top:-1px"><circle cx="593.4" cy="267.9" r="12.1" fill="#fff" fill-opacity="0.3"/><circle cx="593.4" cy="267.9" r="11.4" fill="#4e79a7"/><circle cx="610.0" cy="273.0" r="12.1" fill="#fff" fill-opacity="0.3"/><circle cx="610.0" cy="273.0" r="11.4" fill="#4e79a7"/><circle cx="614.3" cy="279.5" r="12.1" fill="#fff" fill-opacity="0.3"/><circle cx="614.3" cy="279.5" r="11.4" fill="#4e79a7"/><circle cx="632.6" cy="295.1" r="12.1" fill="#fff" fill-opacity="0.3"/><circle cx="632.6" cy="295.1" r="11.4" fill="#4e79a7"/><circle cx="641.5" cy="308.4" r="12.1" fill="#fff" fill-opacity="0.3"/><circle cx="641.5" cy="308.4" r="11.4" fill="#4e79a7"/><circle cx="593.4" cy="324.4" r="12.1" fill="#fff" fill-opacity="0.3"/><circle cx="593.4" cy="324.4" r="11.4" fill="#4e79a7"/><circle cx="623.6" cy="323.0" r="12.1" fill="#fff" fill-opacity="0.3"/><circle cx="623.6" cy="323.0" r="11.4" fill="#4e79a7"/><circle cx="618.0" cy="335.0" r="12.1" fill="#fff" fill-opacity="0.3"/><circle cx="618.0" cy="335.0" r="11.4" fill="#4e79a7"/><circle cx="617.4" cy="347.3" r="12.1" fill="#fff" fill-opacity="0.3"/><circle cx="617.4" cy="347.3" r="11.4" fill="#4e79a7"/><circle cx="640.3" cy="342.0" r="12.1" fill="#fff" fill-opacity="0.3"/><circle cx="640.3" cy="342.0" r="11.4" fill="#4e79a7"/><circle cx="639.6" cy="363.0" r="12.1" fill="#fff" fill-opacity="0.3"/><circle cx="639.6" cy="363.0" r="11.4" fill="#4e79a7"/><circle cx="644.0" cy="364.5" r="12.1" fill="#fff" fill-opacity="0.3"/><circle cx="644.0" cy="364.5" r="11.4" fill="#4e79a7"/><circle cx="670.3" cy="329.2" r="12.1" fill="#fff" fill-opacity="0.3"/><circle cx="670.3" cy="329.2" r="11.4" fill="#4e79a7"/><circle cx="668.4" cy="355.6" r="12.1" fill="#fff" fill-opacity="0.3"/><circle cx="668.4" cy="355.6" r="11.4" fill="#4e79a7"/><circle cx="666.6" cy="376.4" r="12.1" fill="#fff" fill-opacity="0.3"/><circle cx="666.6" cy="376.4" r="11.4" fill="#4e79a7"/><circle cx="567.4" cy="387.2" r="12.1" fill="#fff" fill-opacity="0.3"/><circle cx="567.4" cy="387.2" r="11.4" fill="#4e79a7"/><circle cx="684.5" cy="247.4" r="12.1" fill="#fff" fill-opacity="0.3"/><circle cx="684.5" cy="247.4" r="11.4" fill="#4e79a7"/><circle cx="172.5" cy="375.4" r="12.1" fill="#fff" fill-opacity="0.3"/><circle cx="172.5" cy="375.4" r="11.4" fill="#4e79a7"/><circle cx="213.6" cy="384.4" r="12.1" fill="#fff" fill-opacity="0.3"/><circle cx="213.6" cy="384.4" r="11.4" fill="#4e79a7"/><circle cx="206.3" cy="394.6" r="12.1" fill="#fff" fill-opacity="0.3"/><circle cx="206.3" cy="394.6" r="11.4" fill="#4e79a7"/><circle cx="257.4" cy="391.3" r="12.1" fill="#fff" fill-opacity="0.3"/><circle cx="257.4" cy="391.3" r="11.4" fill="#4e79a7"/><circle cx="159.5" cy="492.1" r="12.1" fill="#fff" fill-opacity="0.3"/><circle cx="159.5" cy="492.1" r="11.4" fill="#4e79a7"/><circle cx="292.2" cy="539.3" r="12.1" fill="#fff" fill-opacity="0.3"/><circle cx="292.2" cy="539.3" r="11.4" fill="#4e79a7"/><circle cx="254.5" cy="571.5" r="12.1" fill="#fff" fill-opacity="0.3"/><circle cx="254.5" cy="571.5" r="11.4" fill="#4e79a7"/><circle cx="182.9" cy="615.7" r="12.1" fill="#fff" fill-opacity="0.3"/><circle cx="182.9" cy="615.7" r="11.4" fill="#4e79a7"/><circle cx="399.2" cy="699.3" r="12.1" fill="#fff" fill-opacity="0.3"/><circle cx="399.2" cy="699.3" r="11.4" fill="#4e79a7"/><circle cx="322.8" cy="756.8" r="12.1" fill="#fff" fill-opacity="0.3"/><circle cx="322.8" cy="756.8" r="11.4" fill="#4e79a7"/><circle cx="775.3" cy="423.3" r="12.1" fill="#fff" fill-opacity="0.3"/><circle cx="775.3" cy="423.3" r="11.4" fill="#4e79a7"/><circle cx="843.4" cy="457.3" r="12.1" fill="#fff" fill-opacity="0.3"/><circle cx="843.4" cy="457.3" r="11.4" fill="#4e79a7"/><circle cx="942.4" cy="439.3" r="12.1" fill="#fff" fill-opacity="0.3"/><circle cx="942.4" cy="439.3" r="11.4" fill="#4e79a7"/><circle cx="1225.3" cy="502.0" r="12.1" fill="#fff" fill-opacity="0.3"/><circle cx="1225.3" cy="502.0" r="11.4" fill="#4e79a7"/><circle cx="1133.3" cy="603.1" r="12.1" fill="#fff" fill-opacity="0.3"/><circle cx="1133.3" cy="603.1" r="11.4" fill="#4e79a7"/><circle cx="931.1" cy="686.8" r="12.1" fill="#fff" fill-opacity="0.3"/><circle cx="931.1" cy="686.8" r="11.4" fill="#4e79a7"/><circle cx="1211.0" cy="671.3" r="12.1" fill="#fff" fill-opacity="0.3"/><circle cx="1211.0" cy="671.3" r="11.4" fill="#4e79a7"/></svg>
<div class="abs" style="left:5px;top:754px;font-size:11px;color:#666">© OpenStreetMap contributors</div>
</div>
<!-- bottom band -->
<div class="abs" style="left:0;top:904px;width:1389px;height:30px;background:#e5e5e5;border-top:1px solid #cdcdcd"></div>
<div class="status">
  <div class="ssep" style="left:1020px"></div>
  <svg class="abs" style="left:1026px;top:2px" width="12" height="14" viewBox="0 0 12 14"><ellipse cx="6" cy="3.6" rx="2.2" ry="2.6" fill="none" stroke="#555" stroke-width="1.1"/><path d="M1.3,12.6 L1.3,10.6 Q1.3,7.9 6,7.9 Q10.7,7.9 10.7,10.6 L10.7,12.6Z" fill="none" stroke="#555" stroke-width="1.1"/></svg>
  <div class="abs" style="left:1047px;top:3px;font-size:11.5px;letter-spacing:-0.15px;color:#333">Julien Godenir</div>
  <svg class="abs" style="left:1132px;top:8px" width="9" height="6"><path d="M0,0 L8,0 L4,5Z" fill="#111"/></svg>
  <div class="ssep" style="left:1147px"></div>
  <div class="ssep" style="left:1174px"></div>
  <div class="ssep" style="left:1201px"></div>
  <div class="ssep" style="left:1248px"></div>
  <svg class="abs" style="left:1255px;top:5px" width="60" height="10" viewBox="0 0 60 10">
    <rect x="1" y="1" width="1.2" height="8" fill="#b0b0b0"/><path d="M9,1 L3,5 L9,9Z" fill="#b0b0b0"/>
    <path d="M23,1 L18,5 L23,9Z" fill="#b0b0b0"/>
    <path d="M35,1 L40,5 L35,9Z" fill="#b0b0b0"/>
    <path d="M50,1 L56,5 L50,9Z" fill="#b0b0b0"/><rect x="56" y="1" width="1.2" height="8" fill="#b0b0b0"/>
  </svg>
  <div class="ssep" style="left:1319px"></div>
  <svg class="abs" style="left:1327px;top:4px" width="13" height="12" viewBox="0 0 13 12">
    <rect x="0" y="0" width="3" height="3" fill="#b8b8b8"/><rect x="4.5" y="0" width="3" height="3" fill="#b8b8b8"/><rect x="9" y="0" width="3" height="3" fill="#b8b8b8"/>
    <rect x="0" y="4.5" width="3" height="3" fill="#b8b8b8"/><rect x="4.5" y="4.5" width="3" height="3" fill="#b8b8b8"/><rect x="9" y="4.5" width="3" height="3" fill="#b8b8b8"/>
    <rect x="0" y="9" width="3" height="3" fill="#b8b8b8"/><rect x="4.5" y="9" width="3" height="3" fill="#b8b8b8"/><rect x="9" y="9" width="3" height="3" fill="#b8b8b8"/>
  </svg>
  <svg class="abs" style="left:1349px;top:4px" width="12" height="12" viewBox="0 0 12 12">
    <rect x="0" y="0" width="12" height="7" fill="#b8b8b8"/><rect x="0" y="9" width="3" height="3" fill="#b8b8b8"/><rect x="4.5" y="9" width="3" height="3" fill="#b8b8b8"/><rect x="9" y="9" width="3" height="3" fill="#b8b8b8"/>
  </svg>
  <div class="abs" style="left:1370px;top:4px;width:11px;height:11px;background:#666"></div>
</div>
<!-- right strip -->
<div class="abs" style="left:1387px;top:0;width:2px;height:953px;background:#fbfbfb"></div>
<!-- context menu -->
<div class="menu">
  <div class="vsep"></div>
  <div class="abs" style="left:2px;top:329px;width:197px;height:22px;background:#e0edfc;border:1px solid #29a0db"></div><div class="chk" style="top:329px"></div><div class="sep" style="top:26px"></div><div class="sep" style="top:57px"></div><div class="sep" style="top:110px"></div><div class="sep" style="top:185px"></div><div class="sep" style="top:238px"></div><div class="sep" style="top:269px"></div><div class="sep" style="top:322px"></div><div class="sep" style="top:375px"></div><div class="chk" style="top:86px"></div><div class="chk" style="top:161px"></div><div class="chk" style="top:214px"></div><svg class="abs" style="left:7px;top:91px" width="12" height="12" viewBox="0 0 12 12"><path d="M1.6,6.0 L2.9,5.0 L5.3,8.3 L10.1,0.6 L11.0,1.3 L5.5,10.9Z" fill="#1010a0"/></svg><svg class="abs" style="left:8px;top:167px" width="10" height="10" viewBox="0 0 10 10"><defs><radialGradient id="bg1" cx="0.55" cy="0.35" r="0.65"><stop offset="0" stop-color="#b8b8ee"/><stop offset="0.55" stop-color="#4a4aa8"/><stop offset="1" stop-color="#14146e"/></radialGradient></defs><circle cx="5" cy="5" r="4.2" fill="url(#bg1)"/></svg><svg class="abs" style="left:8px;top:220px" width="10" height="10" viewBox="0 0 10 10"><defs><radialGradient id="bg2" cx="0.55" cy="0.35" r="0.65"><stop offset="0" stop-color="#b8b8ee"/><stop offset="0.55" stop-color="#4a4aa8"/><stop offset="1" stop-color="#14146e"/></radialGradient></defs><circle cx="5" cy="5" r="4.2" fill="url(#bg2)"/></svg><svg class="abs" style="left:7px;top:334px" width="12" height="12" viewBox="0 0 12 12"><path d="M1.6,6.0 L2.9,5.0 L5.3,8.3 L10.1,0.6 L11.0,1.3 L5.5,10.9Z" fill="#1010a0"/></svg><svg class="abs" style="left:7px;top:281px" width="12" height="12" viewBox="0 0 12 12"><path d="M6,1.2 L11,10.8 L1,10.8Z" fill="none" stroke="#333" stroke-width="1.3"/></svg><div class="mi" style="top:2px;">Filter...</div><div class="mi" style="top:33px;">Show Filter</div><div class="mi" style="top:64px;">Format...</div><div class="mi" style="top:86px;">Include in Tooltip</div><div class="mi" style="top:117px;">Dimension</div><div class="mi" style="top:139px;">Attribute</div><div class="mi" style="top:161px;">Measure (Average)</div><div class="mi" style="top:192px;">Discrete</div><div class="mi" style="top:214px;">Continuous</div><div class="mi" style="top:245px;font-weight:bold;">Edit in Shelf</div><div class="mi" style="top:276px;">Add Table Calculation...</div><div class="mi" style="top:298px;">Quick Table Calculation</div><div class="mi" style="top:329px;">Dual Axis</div><div class="mi" style="top:351px;">Mark Type</div><div class="mi" style="top:382px;">Remove</div><div class="arr" style="top:168px"></div><div class="arr" style="top:305px"></div><div class="arr" style="top:358px"></div>
</div>
</body></html>
